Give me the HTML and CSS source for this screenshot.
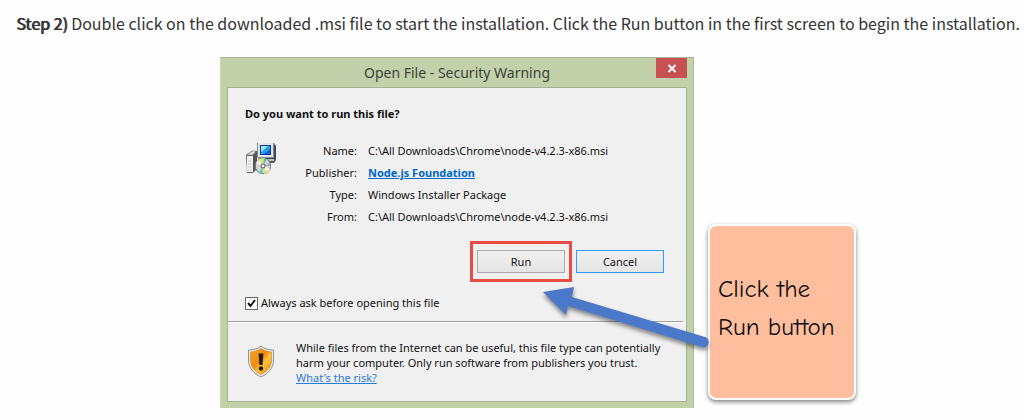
FILE: index.html
```html
<!DOCTYPE html>
<html lang="en">
<head>
<meta charset="utf-8">
<meta name="viewport" content="width=device-width, initial-scale=1">
<title>Installation: Step 2</title>
<link rel="stylesheet" href="styles.css">
</head>
<body>
<main>
  <p class="step"><strong>Step 2)</strong> Double click on the downloaded .msi file to start the installation. Click the Run button in the first screen to begin the installation.</p>
  <div class="figure">
    <section class="dialog" aria-labelledby="dialog-title">
      <header class="titlebar">
        <h1 class="title" id="dialog-title">Open File - Security Warning</h1>
        <button class="close" type="button" aria-label="Close">
          <svg width="10" height="9" viewBox="0 0 10 9"><path d="M1.500 1l7 7M8.500 1l-7 7" stroke="#fff" stroke-width="2" fill="none"/></svg>
        </button>
      </header>
      <div class="panel">
        <div class="content">
          <h2 class="question">Do you want to run this file?</h2>
          <div class="details">
            <svg class="installer" width="32" height="33" viewBox="0 0 32 33" aria-hidden="true">
              <path d="M24 15h6l1 3-2 3h-7" fill="#55585c"/>
              <path d="M21 16h8v3h-8z" fill="#b9bcc0"/>
              <path d="M12 1h17l2 2v14H14l-2-2z" fill="#85898d"/>
              <path d="M13 1h15v14H13z" fill="#e3e5e7"/>
              <path d="M15 3h11v10H15z" fill="#0a37a5"/>
              <path d="M16 4h9v8h-9z" fill="#299ee9"/>
              <path d="M16 4h7l-7 6z" fill="#9be7fb"/>
              <path d="M25 7v5h-6z" fill="#1263cf"/>
              <path d="M29 3l2 1v13H17v-1h12z" fill="#44484b"/>
              <path d="M1 13l6-4h5v18l-4 4H2z" fill="#666"/>
              <path d="M2 14h6v16H2z" fill="#eee"/>
              <path d="M8 14l4-4v16l-4 4z" fill="#555"/>
              <path d="M1 13h7l3-4H7z" fill="#ddd" stroke="#777" stroke-width=".7"/>
              <path d="M3 19h4M3 22h4M3 25h4M3 28h4" stroke="#bbb" stroke-dasharray="1 1"/>
              <circle cx="18" cy="24" r="7.700" fill="#d3d6d4" stroke="#777c78"/>
              <path d="M18 24l-4-7 5-1zM18 24l5 6-4 2z" fill="#f4e45b"/>
              <path d="M18 24l1-8 3 1zM18 24l-1 8-3-1z" fill="#44c9c5"/>
              <path d="M18 24l-7-3 2-3zM18 24l7 3-2 3z" fill="#fafafa"/>
              <path d="M18 24l7-3v3z" fill="#a8afaa"/>
              <circle cx="18" cy="24" r="2.500" fill="#777"/>
              <circle cx="18" cy="24" r="1.200" fill="#fff"/>
            </svg>
            <dl class="facts">
              <dt>Name:</dt><dd>C:\All Downloads\Chrome\node-v4.2.3-x86.msi</dd>
              <dt>Publisher:</dt><dd><a class="publisher" href="#publisher">Node.js Foundation</a></dd>
              <dt>Type:</dt><dd>Windows Installer Package</dd>
              <dt>From:</dt><dd>C:\All Downloads\Chrome\node-v4.2.3-x86.msi</dd>
            </dl>
          </div>
          <div class="actions">
            <div class="highlight"><button class="button" type="button">Run</button></div>
            <button class="button button-default" type="button">Cancel</button>
          </div>
          <label class="always" for="always"><input class="check" id="always" type="checkbox" checked>Always ask before opening this file</label>
        </div>
        <div class="warning">
          <svg class="shield" width="28" height="33" viewBox="0 0 28 33" aria-hidden="true">
            <defs><linearGradient id="amber" x1="0" y1="0" x2="1" y2="1"><stop offset="0" stop-color="#f6a62c"/><stop offset=".45" stop-color="#f28a0c"/><stop offset=".6" stop-color="#ffc43c"/><stop offset="1" stop-color="#ee8208"/></linearGradient></defs>
            <path d="M14 1c3 2.500 7 4 12.500 4v10c0 8-5 13.500-12.500 17C6.500 28.500 1.500 23 1.500 15V5C7 5 11 3.500 14 1z" fill="#e8e9e7" stroke="#929592"/>
            <path d="M14 3.500c3 2 6 3 10.500 3.500v8c0 6.500-4 11.500-10.500 14.500C7.500 26.500 3.500 21.500 3.500 15V7C8 6.500 11 5.500 14 3.500z" fill="url(#amber)" stroke="#c9882b" stroke-width=".6"/>
            <path d="M11.600 8.500h4.800l-.8 11.500h-3.200z" fill="#241d12"/>
            <circle cx="14" cy="23.500" r="2.200" fill="#241d12"/>
          </svg>
          <p class="advice">While files from the Internet can be useful, this file type can potentially harm your computer. Only run software from publishers you trust.<br><a class="risk" href="#risk">What's the risk?</a></p>
        </div>
      </div>
    </section>
    <aside class="note">Click the<br>Run button</aside>
    <svg class="arrow" width="172" height="70" viewBox="0 0 172 70" aria-hidden="true">
      <path d="M3 7L34 2 32 12 165 52A5 5 0 0 1 162 62L28 21 26 30Z" fill="#4b79ca"/>
    </svg>
  </div>
</main>
</body>
</html>
```

FILE: styles.css
```css
* {
  box-sizing: border-box;
}

body {
  margin: 0;
  background: #fefefe;
  color: #111;
  font-family: "Noto Sans", "Open Sans", sans-serif;
  font-size: 11px;
}

main {
  padding: 11px 0 12px 16px;
}

.step {
  margin: 0;
  color: #343434;
  font-family: "Noto Sans CJK SC", sans-serif;
  font-size: 16px;
  line-height: 24px;
}

.step strong {
  color: #333;
  font-weight: 400;
  text-shadow: 1px 0 #333;
}

.figure {
  position: relative;
  display: flex;
  align-items: flex-end;
  gap: 14px;
  max-width: 636px;
  margin: 22px auto 0;
  left: 18px;
}

.dialog {
  flex: 1;
  padding: 0 6px 5px;
  background: #c3d1ab;
  border: 1px solid #a9b795;
  border-left-color: #c9d6b6;
  border-bottom-color: #c3d1ab;
}

.titlebar {
  display: grid;
  grid-template-columns: 31px 1fr 31px;
  align-items: start;
}

.title {
  grid-column: 2;
  margin: 0;
  color: #3c4237;
  font-size: 14px;
  font-weight: 400;
  line-height: 29px;
  text-align: center;
}

.close {
  display: grid;
  place-items: center;
  height: 20px;
  padding: 0;
  background: #c75050;
  border: 0;
}

.panel {
  background: #f0f0f0;
  border: 1px solid #a5b392;
}

.content {
  padding: 18px 22px 10px 17px;
}

.question {
  margin: 0;
  font-size: 11px;
  line-height: 16px;
}

.details {
  display: grid;
  grid-template-columns: 32px 1fr;
  margin-top: 18px;
}

.installer {
  margin-top: 2px;
}

.facts {
  display: grid;
  grid-template-columns: 80px 1fr;
  column-gap: 11px;
  margin: 0;
  line-height: 22px;
}

.facts dt {
  text-align: right;
}

.facts dd {
  margin: 0;
}

.publisher {
  color: #0066cc;
  font-weight: 700;
}

.actions {
  display: flex;
  align-items: center;
  justify-content: flex-end;
  gap: 4px;
  margin-top: 13px;
}

.highlight {
  padding: 6px 4px;
  border: 3px solid #e94b45;
}

.button {
  display: block;
  width: 88px;
  height: 23px;
  padding: 0;
  color: #111;
  background: linear-gradient(#f0f0f0, #e5e5e5);
  border: 1px solid #acacac;
  font: inherit;
}

.button-default {
  border-color: #3399ff;
}

.always {
  display: flex;
  align-items: center;
  gap: 3px;
  width: fit-content;
  margin-top: 13px;
  line-height: 16px;
}

.check {
  appearance: none;
  width: 13px;
  height: 13px;
  margin: 0;
  background: #fff;
  border: 1px solid #666;
}

.check:checked {
  background: #fff url("data:image/svg+xml,%3Csvg xmlns='http://www.w3.org/2000/svg' viewBox='0 0 11 11'%3E%3Cpath d='M2 5l2.500 3L9 2' fill='none' stroke='%23111' stroke-width='2'/%3E%3C/svg%3E");
}

.warning {
  display: grid;
  grid-template-columns: 28px 1fr;
  column-gap: 21px;
  margin-right: 3px;
  padding: 18px 16px 16px 19px;
  border-top: 1px solid #a0a0a0;
  box-shadow: inset 0 1px #fff;
}

.shield {
  margin-top: 5px;
}

.advice {
  margin: 0;
  line-height: 15px;
}

.risk {
  color: #2a7bd8;
}

.note {
  display: flex;
  flex: 0 0 148px;
  align-items: center;
  min-height: 176px;
  margin-bottom: 8px;
  padding: 0 8px 8px;
  background: #ffbf9f;
  border: 2px solid #fff;
  border-radius: 8px;
  box-shadow: 0 2px 4px rgba(0, 0, 0, 0.5);
  color: #111;
  font-family: "Comic Neue", "Liberation Sans Narrow", "DejaVu Sans Condensed", cursive;
  font-size: 25px;
  line-height: 38px;
}

.arrow {
  position: absolute;
  right: 144px;
  bottom: 53px;
  filter: drop-shadow(0 3px 2px rgba(0, 0, 0, 0.45));
}
```
